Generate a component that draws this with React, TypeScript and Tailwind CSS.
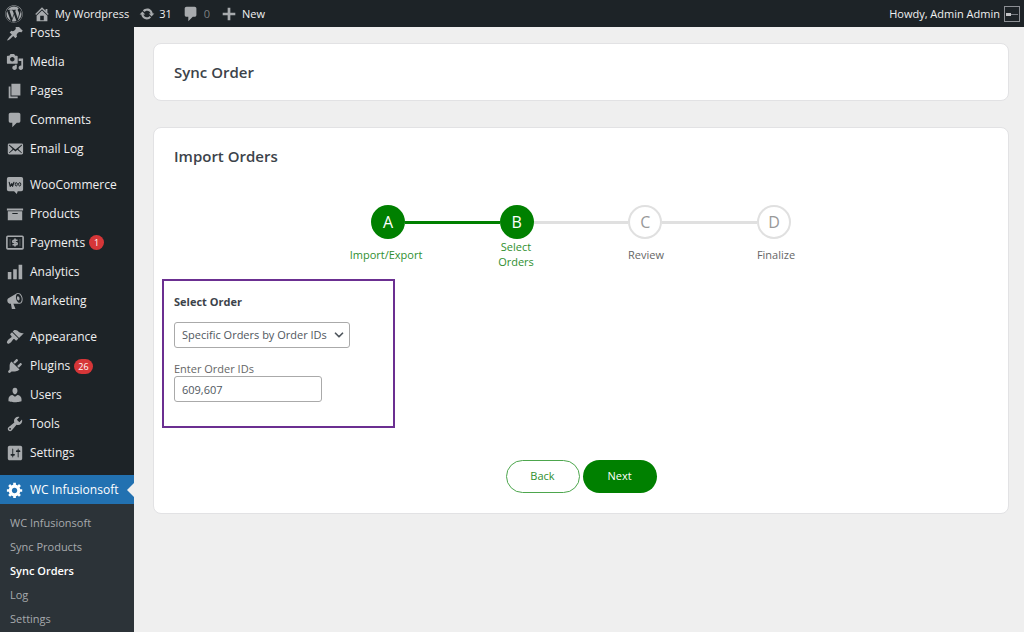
import React, { useState } from 'react';
import { FaWordpress } from 'react-icons/fa';
import { ChevronDown } from 'lucide-react';

const ICONS = {
  post: 'M10.44 3.02l1.82-1.82 6.36 6.35-1.83 1.82c-1.05-.68-2.48-.57-3.41.36l-.75.75c-.92.93-1.04 2.35-.35 3.41l-1.83 1.82-2.41-2.41-2.8 2.79c-.42.42-3.38 2.71-3.8 2.29s1.86-3.39 2.28-3.81l2.79-2.79L4.1 9.36l1.83-1.82c1.05.69 2.48.57 3.4-.36l.75-.75c.93-.92 1.05-2.35.36-3.41z',
  media: 'M13 11V4c0-.55-.45-1-1-1h-1.67L9 1H5L3.67 3H2c-.55 0-1 .45-1 1v7c0 .55.45 1 1 1h10c.55 0 1-.45 1-1zM7 4.5c1.38 0 2.5 1.12 2.5 2.5S8.38 9.5 7 9.5 4.5 8.38 4.5 7 5.62 4.5 7 4.5zM14 6h5v10.5c0 1.38-1.12 2.5-2.5 2.5S14 17.88 14 16.5s1.12-2.5 2.5-2.5c.17 0 .34.02.5.05V9h-3V6zm-4 8.05V13h2v3.5c0 1.38-1.12 2.5-2.5 2.5S7 17.88 7 16.5 8.12 14 9.5 14c.17 0 .34.02.5.05z',
  page: 'M6 15V2h10v13H6zm-1 1h8v2H3V5h2v11z',
  comment: 'M5 2h9c1.1 0 2 .9 2 2v7c0 1.1-.9 2-2 2h-2l-5 5v-5H5c-1.1 0-2-.9-2-2V4c0-1.1.9-2 2-2z',
  email: 'M19 14.5v-9c0-.83-.67-1.5-1.5-1.5H3.49c-.83 0-1.5.67-1.5 1.5v9c0 .83.67 1.5 1.5 1.5H17.5c.83 0 1.5-.67 1.5-1.5zm-1.31-9.11c.33.33.15.67-.03.84L13.6 9.95l3.9 4.06c.12.14.2.36.06.51-.13.16-.43.15-.56.05l-4.37-3.73-2.14 1.95-2.13-1.95-4.37 3.73c-.13.1-.43.11-.56-.05-.14-.15-.06-.37.06-.51l3.9-4.06-4.06-3.72c-.18-.17-.36-.51-.03-.84s.67-.17.95.07l6.24 5.04 6.25-5.04c.28-.24.62-.4.95-.07z',
  archive: 'M19 4v2H1V4h18zM2 7h16v10H2V7zm11 3V9H7v1h6z',
  chart: 'M18 18V2h-4v16h4zm-6 0V7H8v11h4zm-6 0v-8H2v8h4z',
  megaphone: 'M18.15 5.94c.46 1.62.38 3.22-.02 4.48-.42 1.28-1.26 2.18-2.3 2.48-.16.06-.26.06-.4.06-.06.02-.12.02-.18.02-.06.02-.14.02-.22.02h-6.8l2.22 5.5c.02.14-.06.26-.14.34-.08.1-.24.16-.34.16H6.95c-.1 0-.26-.06-.34-.16-.08-.08-.16-.2-.14-.34l-1-5.5H4.25l-.02-.02c-.5.06-1.08-.18-1.54-.62s-.88-1.08-1.06-1.88c-.24-.8-.2-1.56-.02-2.2.18-.62.58-1.08 1.06-1.3l.02-.02 9-5.4c.1-.06.18-.1.24-.16.06-.04.14-.08.24-.12.16-.08.28-.12.5-.18 1.04-.3 2.24.1 3.22.98s1.84 2.24 2.26 3.86zm-2.58 5.98h-.02c.4-.1.74-.34 1.04-.7.58-.7.86-1.76.86-3.04 0-.64-.1-1.3-.28-1.98-.34-1.36-1.02-2.5-1.78-3.24s-1.68-1.1-2.46-.88c-.82.22-1.4.96-1.7 2-.32 1.04-.28 2.36.06 3.72.38 1.36 1 2.5 1.8 3.24.78.74 1.62 1.1 2.48.88zm-2.54-7.08c.22-.04.42-.02.62.04.38.16.76.48 1.02 1s.42 1.2.42 1.78c0 .3-.04.56-.12.8-.18.48-.44.84-.86.94-.34.1-.8-.06-1.14-.4s-.64-.86-.78-1.5c-.18-.62-.12-1.24.02-1.72s.48-.84.82-.94z',
  appearance: 'M14.48 11.06L7.41 3.99l1.5-1.5c.5-.56 2.3-.47 3.51.32 1.21.8 1.43 1.28 2.91 2.1 1.18.64 2.45 1.26 4.45.85zm-.71.71L6.7 4.7 4.93 6.47c-.39.39-.39 1.02 0 1.41l1.06 1.06c.39.39.39 1.03 0 1.42-.6.6-1.43 1.11-2.21 1.69-.35.26-.7.53-1.01.84C1.43 14.23.4 16.08 1.4 17.07c.99 1 2.84-.03 4.18-1.36.31-.31.58-.66.85-1.02.57-.78 1.08-1.61 1.69-2.21.39-.39 1.02-.39 1.41 0l1.06 1.06c.39.39 1.02.39 1.41 0z',
  plugins: 'M13.11 4.36L9.87 7.6 8 5.73l3.24-3.24c.35-.34 1.05-.2 1.56.32.52.51.66 1.21.31 1.55zm-8 1.77l.91-1.12 9.01 9.01-1.19.84c-.71.71-2.63 1.16-3.82 1.16H6.14L4.9 17.26c-.59.59-1.54.59-2.12 0-.59-.58-.59-1.53 0-2.12l1.24-1.24v-3.88c0-1.13.4-3.19 1.09-3.89zm7.26 3.97l3.24-3.24c.34-.35 1.04-.21 1.55.31.52.51.66 1.21.31 1.55l-3.24 3.25z',
  users: 'M10 9.25c-2.27 0-2.73-3.44-2.73-3.44C7 4.02 7.82 2 9.97 2c2.16 0 2.98 2.02 2.71 3.81 0 0-.41 3.44-2.68 3.44zm0 2.57L12.72 10c2.39 0 4.52 2.33 4.52 4.53v2.49s-3.65 1.13-7.24 1.13c-3.65 0-7.24-1.13-7.24-1.13v-2.49c0-2.25 1.94-4.48 4.47-4.48z',
  tools: 'M16.68 9.77c-1.34 1.34-3.3 1.67-4.95.99l-5.41 6.52c-.99.99-2.59.99-3.58 0s-.99-2.59 0-3.57l6.52-5.42c-.68-1.65-.35-3.61.99-4.95 1.28-1.28 3.12-1.62 4.72-1.06l-2.89 2.89 2.82 2.82 2.86-2.87c.53 1.58.18 3.39-1.08 4.65zM3.81 16.21c.4.39 1.04.39 1.43 0 .4-.4.4-1.04 0-1.43-.39-.4-1.03-.4-1.43 0-.39.39-.39 1.03 0 1.43z',
  settings: 'M18 16V4c0-1.1-.9-2-2-2H4c-1.1 0-2 .9-2 2v12c0 1.1.9 2 2 2h12c1.1 0 2-.9 2-2zM8 11h1c.55 0 1 .45 1 1s-.45 1-1 1H8v1.5c0 .28-.22.5-.5.5s-.5-.22-.5-.5V13H6c-.55 0-1-.45-1-1s.45-1 1-1h1V5.5c0-.28.22-.5.5-.5s.5.22.5.5V11zm5-2h-1c-.55 0-1-.45-1-1s.45-1 1-1h1V5.5c0-.28.22-.5.5-.5s.5.22.5.5V7h1c.55 0 1 .45 1 1s-.45 1-1 1h-1v5.5c0 .28-.22.5-.5.5s-.5-.22-.5-.5V9z',
  gear: 'M18 12h-2.18c-.17.7-.44 1.35-.81 1.93l1.54 1.54-2.1 2.1-1.54-1.54c-.58.36-1.23.63-1.91.79V19H8v-2.18c-.68-.16-1.33-.43-1.91-.79l-1.54 1.54-2.12-2.12 1.54-1.54c-.36-.58-.63-1.23-.79-1.91H1V9.03h2.17c.16-.7.44-1.35.8-1.94L2.43 5.55l2.1-2.1 1.54 1.54c.58-.37 1.24-.64 1.93-.81V2h3v2.18c.68.16 1.33.43 1.91.79l1.54-1.54 2.12 2.12-1.54 1.54c.36.59.64 1.24.8 1.94H18V12zm-8.5 1.5c1.66 0 3-1.34 3-3s-1.34-3-3-3-3 1.34-3 3 1.34 3 3 3z',
  update: 'M10.2 3.28c3.53 0 6.43 2.61 6.92 6h2.08l-3.5 4-3.5-4h2.32c-.45-1.97-2.21-3.45-4.32-3.45-1.45 0-2.73.71-3.54 1.78L4.95 5.66C6.23 4.2 8.11 3.28 10.2 3.28zm-.4 13.44c-3.52 0-6.43-2.61-6.92-6H.8l3.5-4c1.17 1.33 2.33 2.67 3.5 4H5.48c.45 1.97 2.21 3.45 4.32 3.45 1.45 0 2.73-.71 3.54-1.78l1.71 1.95c-1.28 1.46-3.15 2.38-5.25 2.38z',
  home: 'M16 8.5l1.53 1.53-1.06 1.06L10 4.6l-6.47 6.49-1.06-1.06L10 2.5l4 4v-2h2v4zm-6-2.46l6 5.99V18H4v-5.97zM12 17v-5H8v5h4z',
  plus: 'M17 8.5v3h-5.5V17h-3v-5.5H3v-3h5.5V3h3v5.5H17z',
};

type IconName = keyof typeof ICONS | 'woo' | 'payments';

const Icon: React.FC<{ name: IconName; className?: string }> = ({ name, className = 'size-4' }) => {
  if (name === 'woo') {
    return (
      <svg viewBox="0 0 20 20" className={className} aria-hidden="true">
        <path fill="currentColor" d="M3 1h14a2 2 0 0 1 2 2v12a2 2 0 0 1-2 2h-4l-1 3-3-3H3a2 2 0 0 1-2-2V3a2 2 0 0 1 2-2z" />
        <path fill="none" stroke="#1d2327" strokeWidth="1.3" strokeLinecap="round" strokeLinejoin="round" d="M3.6 7l1.1 4.5L6.5 8.4l.8 3.1L8.8 7" />
        <ellipse cx="11.4" cy="9.2" rx="1.2" ry="1.9" fill="none" stroke="#1d2327" strokeWidth="1.1" />
        <ellipse cx="15.2" cy="9.2" rx="1.2" ry="1.9" fill="none" stroke="#1d2327" strokeWidth="1.1" />
      </svg>
    );
  }
  if (name === 'payments') {
    return (
      <svg viewBox="0 0 20 20" className={className} fill="none" stroke="currentColor" aria-hidden="true">
        <rect x="1" y="2.5" width="18" height="14" rx="1" strokeWidth="1.8" />
        <path strokeWidth="1.8" d="M12.8 7H8.8a1.2 1.2 0 0 0 0 2.5h2.4a1.2 1.2 0 0 1 0 2.5H7.2M10 5v9" />
        <path strokeWidth="1.2" d="M4.5 5.5v8M15.5 5.5v8" opacity=".35" />
      </svg>
    );
  }
  return (
    <svg viewBox="0 0 20 20" className={className} fill="currentColor" fillRule="evenodd" aria-hidden="true">
      <path d={ICONS[name]} />
    </svg>
  );
};

interface MenuEntry {
  label: string;
  icon: IconName;
  badge?: number;
}

const MENU_GROUPS: MenuEntry[][] = [
  [
    { label: 'Posts', icon: 'post' },
    { label: 'Media', icon: 'media' },
    { label: 'Pages', icon: 'page' },
    { label: 'Comments', icon: 'comment' },
    { label: 'Email Log', icon: 'email' },
  ],
  [
    { label: 'WooCommerce', icon: 'woo' },
    { label: 'Products', icon: 'archive' },
    { label: 'Payments', icon: 'payments', badge: 1 },
    { label: 'Analytics', icon: 'chart' },
    { label: 'Marketing', icon: 'megaphone' },
  ],
  [
    { label: 'Appearance', icon: 'appearance' },
    { label: 'Plugins', icon: 'plugins', badge: 26 },
    { label: 'Users', icon: 'users' },
    { label: 'Tools', icon: 'tools' },
    { label: 'Settings', icon: 'settings' },
  ],
];

const SUBMENU = ['WC Infusionsoft', 'Sync Products', 'Sync Orders', 'Log', 'Settings'];

const STEPS = [
  { letter: 'A', label: 'Import/Export', done: true },
  { letter: 'B', label: 'Select\nOrders', done: true },
  { letter: 'C', label: 'Review', done: false },
  { letter: 'D', label: 'Finalize', done: false },
];

const AdminBar = () => (
  <header className="relative z-10 flex h-[27px] shrink-0 items-center justify-between bg-[#1d2327] pl-[5px] pr-1 pt-px text-[11px] text-[#f0f0f1]">
    <div className="flex items-center gap-[10px]">
      <a href="#" aria-label="About WordPress" className="text-[#a7aaad]">
        <FaWordpress className="size-[18px]" />
      </a>
      <a href="#" className="flex items-center gap-1">
        <Icon name="home" className="size-[18px] text-[#a7aaad]" />
        My Wordpress
      </a>
      <a href="#" className="flex items-center gap-1">
        <Icon name="update" className="size-4 text-[#a7aaad]" />
        31
      </a>
      <a href="#" className="flex items-center gap-1 text-[#a7aaad]/70">
        <Icon name="comment" className="size-[18px] text-[#a7aaad]" />
        0
      </a>
      <a href="#" className="flex items-center gap-1">
        <Icon name="plus" className="size-[18px] text-[#a7aaad]" />
        New
      </a>
    </div>
    <a href="#" className="flex items-center gap-1">
      Howdy, Admin Admin
      <span className="flex size-4 items-center border border-[#8c8f94] px-px">
        <span className="h-[3px] w-[5px] bg-[#c3c4c7]" />
        <span className="h-px flex-1 bg-[#787c82]" />
      </span>
    </a>
  </header>
);

const Sidebar = () => (
  <aside className="w-[134px] shrink-0 bg-[#1d2327] text-xs leading-none text-[#f0f0f1]">
    {/* the menu is scrolled, so its first row slides under the admin bar */}
    <nav className="-mt-2">
      {MENU_GROUPS.map((group) => (
        <ul key={group[0].label} className="mb-2 grid h-36 grid-rows-5">
          {group.map((item) => (
            <li key={item.label}>
              <a href="#" className="flex h-full items-center pl-[6px] leading-none">
                <Icon name={item.icon} className="mr-[6px] size-[18px] text-[#a7aaad]" />
                {item.label}
                {item.badge && (
                  <span className="ml-1 flex h-[15px] min-w-[15px] items-center justify-center rounded-full bg-[#d63638] px-1 text-[9px] text-white">
                    {item.badge}
                  </span>
                )}
              </a>
            </li>
          ))}
        </ul>
      ))}
      <a href="#" className="relative flex h-[29px] items-center bg-[#2271b1] pl-[6px] text-white">
        <Icon name="gear" className="mr-[6px] size-[18px]" />
        WC Infusionsoft
        <span className="absolute right-0 top-1/2 -translate-y-1/2 border-y-[7px] border-r-[7px] border-y-transparent border-r-[#efefef]" />
      </a>
      <ul className="bg-[#2c3338] py-[6px] text-[11px] leading-none text-[#a7aaad]">
        {SUBMENU.map((label) => (
          <li key={label}>
            <a
              href="#"
              className={
                label === 'Sync Orders'
                  ? 'flex h-6 items-center pl-[10px] font-semibold text-white'
                  : 'flex h-6 items-center pl-[10px]'
              }
            >
              {label}
            </a>
          </li>
        ))}
      </ul>
    </nav>
  </aside>
);

const Stepper = () => (
  <div>
    <ol className="mx-auto flex w-[420px] items-center">
      {STEPS.map((step, i) => (
        <React.Fragment key={step.letter}>
          {i > 0 && (
            <li
              aria-hidden="true"
              className={step.done ? 'h-[3px] flex-1 bg-[#008000]' : 'h-[3px] flex-1 bg-[#e0e0e0]'}
            />
          )}
          <li
            className={
              step.done
                ? 'flex size-[34px] items-center justify-center rounded-full bg-[#008000] text-base text-white'
                : 'flex size-[34px] items-center justify-center rounded-full border-2 border-[#e0e0e0] text-base text-[#999]'
            }
          >
            {step.letter}
          </li>
        </React.Fragment>
      ))}
    </ol>
    <div className="mx-auto grid h-[30px] w-[520px] grid-cols-4 items-center text-center text-[11px] leading-[15px]">
      {STEPS.map((step) => (
        <span
          key={step.letter}
          className={step.done ? 'whitespace-pre-line text-[#2f8f2f]' : 'whitespace-pre-line text-[#666]'}
        >
          {step.label}
        </span>
      ))}
    </div>
  </div>
);

export default function App() {
  const [mode, setMode] = useState('ids');
  const [orderIds, setOrderIds] = useState('609,607');

  return (
    <div className="flex h-screen flex-col overflow-hidden bg-[#efefef] font-['Open_Sans','Noto_Sans',sans-serif]">
      <AdminBar />
      <div className="flex min-h-0 flex-1">
        <Sidebar />
        <main className="min-w-0 flex-1 overflow-y-auto pb-4 pl-[19px] pr-[15px] pt-4 text-[#3c434a]">
          <section className="rounded-lg border border-[#e2e2e4] bg-white px-5 py-4">
            <h1 className="text-[15px] font-semibold leading-6">Sync Order</h1>
          </section>

          <section className="mt-[26px] rounded-lg border border-[#e2e2e4] bg-white px-2 pb-5 pt-4">
            <h2 className="px-3 text-[15px] font-semibold leading-6">Import Orders</h2>

            <div className="mt-[37px]">
              <Stepper />
            </div>

            <div className="mt-[10px] h-[149px] w-[233px] border-2 border-[#6b2f91] px-[10px] pt-[13px]">
              <h3 className="text-[11px] font-bold leading-4">Select Order</h3>
              <div className="relative mt-3 w-44">
                <select
                  aria-label="Select Order"
                  value={mode}
                  onChange={(e) => setMode(e.target.value)}
                  className="block h-[26px] w-full appearance-none rounded-[3px] border border-[#aaa] bg-white pl-[7px] pr-5 text-[11px] text-[#50575e]"
                >
                  <option value="ids">Specific Orders by Order IDs</option>
                  <option value="all">All Orders</option>
                </select>
                <ChevronDown
                  strokeWidth={3}
                  className="pointer-events-none absolute right-1 top-1/2 size-[14px] -translate-y-1/2 text-[#50575e]"
                />
              </div>
              <label htmlFor="order-ids" className="mt-[14px] block text-[11px] leading-[14px] text-[#666]">
                Enter Order IDs
              </label>
              <input
                id="order-ids"
                type="text"
                value={orderIds}
                onChange={(e) => setOrderIds(e.target.value)}
                className="block h-[26px] w-[148px] rounded-[3px] border border-[#aaa] px-[7px] text-[11px] text-[#50575e]"
              />
            </div>

            <div className="mt-8 flex justify-center gap-[3px] text-[11px]">
              <button type="button" className="h-[33px] w-[74px] rounded-full border border-[#4da64d] text-[#2f8f2f]">
                Back
              </button>
              <button type="button" className="h-[33px] w-[74px] rounded-full bg-[#008000] text-white">
                Next
              </button>
            </div>
          </section>
        </main>
      </div>
    </div>
  );
}
